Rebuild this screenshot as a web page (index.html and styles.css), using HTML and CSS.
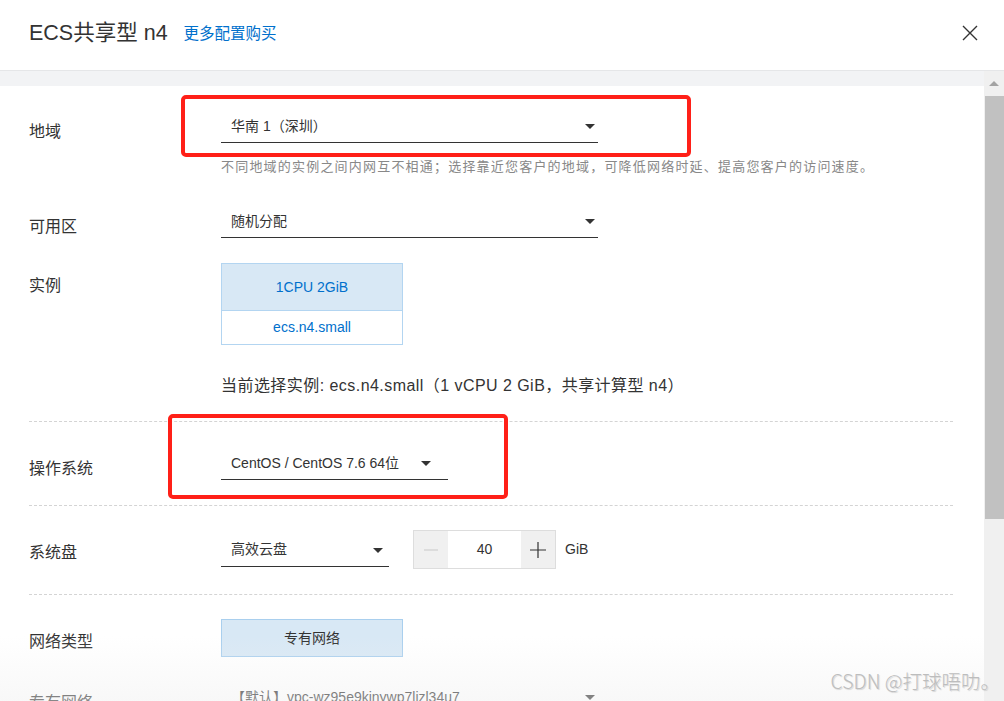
FILE: index.html
```html
<!DOCTYPE html>
<html lang="zh-CN">
  <head>
    <meta charset="UTF-8" />
    <title>ECS共享型 n4</title>
    <link rel="stylesheet" href="styles.css">
  </head>
  <body>
    <div class="dialog">
      <div class="header">
        <span class="title">ECS共享型 n4</span>
        <a class="more-link" href="#">更多配置购买</a>
        <span class="close">
          <svg width="16" height="16" viewBox="0 0 16 16"><path d="M1 1L15 15M15 1L1 15" stroke="#333" stroke-width="1.4" fill="none"/></svg>
        </span>
      </div>

      <div class="body">
        <div class="main">
          <div class="band"></div>
          <div class="content">
            <div class="section">
              <div class="row">
                <div class="label">地域</div>
                <div class="field">
                  <div class="select select-wide"><span>华南 1（深圳）</span><i class="caret"></i></div>
                  <div class="help">不同地域的实例之间内网互不相通；选择靠近您客户的地域，可降低网络时延、提高您客户的访问速度。</div>
                </div>
              </div>
              <div class="row row-zone">
                <div class="label">可用区</div>
                <div class="field">
                  <div class="select select-wide"><span>随机分配</span><i class="caret"></i></div>
                </div>
              </div>
              <div class="row row-instance">
                <div class="label">实例</div>
                <div class="field">
                  <div class="spec-card">
                    <div class="spec-top">1CPU 2GiB</div>
                    <div class="spec-bottom">ecs.n4.small</div>
                  </div>
                  <div class="current">当前选择实例: ecs.n4.small（1 vCPU 2 GiB，共享计算型 n4）</div>
                </div>
              </div>
            </div>

            <div class="section">
              <div class="row">
                <div class="label">操作系统</div>
                <div class="field">
                  <div class="select select-os"><span>CentOS / CentOS 7.6 64位</span><i class="caret"></i></div>
                </div>
              </div>
            </div>

            <div class="section">
              <div class="row">
                <div class="label">系统盘</div>
                <div class="field field-inline">
                  <div class="select select-disk"><span>高效云盘</span><i class="caret"></i></div>
                  <div class="stepper">
                    <span class="step step-minus"><svg width="14" height="2" viewBox="0 0 14 2"><path d="M0 1H14" stroke="#c8c8c8" stroke-width="1"/></svg></span>
                    <span class="step-value">40</span>
                    <span class="step step-plus"><svg width="16" height="16" viewBox="0 0 16 16"><path d="M0 8H16M8 0V16" stroke="#333" stroke-width="1.2"/></svg></span>
                  </div>
                  <span class="unit">GiB</span>
                </div>
              </div>
            </div>

            <div class="section section-last">
              <div class="row">
                <div class="label">网络类型</div>
                <div class="field">
                  <div class="net-btn">专有网络</div>
                </div>
              </div>
              <div class="row row-vpc">
                <div class="label">专有网络</div>
                <div class="field">
                  <div class="select select-wide"><span>【默认】vpc-wz95e9kinywp7lizl34u7</span><i class="caret"></i></div>
                </div>
              </div>
            </div>

            <!-- annotation boxes drawn over the form -->
            <div class="mark mark-region"></div>
            <div class="mark mark-os"></div>
          </div>
        </div>
        <div class="scrollbar">
          <div class="scroll-up"></div>
          <div class="scroll-thumb"></div>
        </div>
      </div>

      <div class="fade"></div>
      <div class="watermark">CSDN @打球唔叻。</div>
    </div>
  </body>
</html>
```

FILE: styles.css
```css
body {
  margin: 0;
  font-family: "Liberation Sans", "Noto Sans CJK SC", sans-serif;
  color: #333;
  background: #fff;
}

.dialog {
  position: relative;
  width: 1004px;
  height: 701px;
  overflow: hidden;
}

.header {
  display: flex;
  align-items: center;
  height: 71px;
  padding: 0 26px 5px 29px;
  box-sizing: border-box;
  border-bottom: 1px solid #e5e6e8;
}

.title {
  font-size: 21.5px;
  line-height: 26px;
  color: #333;
}

.more-link {
  margin-left: 16px;
  font-size: 15.5px;
  line-height: 20px;
  color: #0070cc;
  text-decoration: none;
  margin-top: 2px;
}

.close {
  margin-left: auto;
  display: flex;
}

.body {
  display: flex;
  height: 630px;
}

.main {
  flex: 1;
}

.band {
  height: 15px;
  background: #f2f3f5;
}

.content {
  position: relative;
  padding: 0 31px 0 29px;
}

.section {
  padding: 24px 0 25px;
  border-bottom: 1px dashed #d4d4d4;
}

.section:first-child {
  padding: 23px 0 24px;
}

.section-last {
  border-bottom: none;
}

.row {
  display: flex;
  align-items: flex-start;
}

.row-zone {
  margin-top: 28px;
}

.row-instance {
  margin-top: 25px;
}

.row-vpc {
  margin-top: 23px;
}

.label {
  width: 192px;
  flex-shrink: 0;
  padding-top: 13px;
  font-size: 16px;
  line-height: 20px;
  color: #333;
}

.field-inline {
  display: flex;
  align-items: center;
}

.select {
  display: flex;
  align-items: center;
  justify-content: space-between;
  height: 34px;
  padding: 0 3px 0 10px;
  box-sizing: border-box;
  border-bottom: 1px solid #333;
  font-size: 14px;
  line-height: 20px;
  color: #333;
}

.select-wide {
  width: 377px;
}

.select-os {
  width: 227px;
  padding-right: 17px;
}

.select-disk {
  width: 168px;
  padding-right: 6px;
}

.caret {
  width: 0;
  height: 0;
  border-left: 5px solid transparent;
  border-right: 5px solid transparent;
  border-top: 5px solid #333;
  margin-top: 2px;
}

.help {
  margin-top: 15px;
  font-size: 13px;
  line-height: 18px;
  color: #888;
  letter-spacing: 1.2px;
  white-space: nowrap;
}

.spec-card {
  width: 182px;
  border: 1px solid #b3d5f1;
  box-sizing: border-box;
  font-size: 14px;
  color: #0070cc;
  text-align: center;
}

.spec-top {
  height: 46px;
  line-height: 46px;
  background: #d8e8f5;
  border-bottom: 1px solid #b3d5f1;
}

.spec-bottom {
  height: 33px;
  line-height: 33px;
  background: #fff;
}

.current {
  margin-top: 30px;
  font-size: 16px;
  line-height: 22px;
  letter-spacing: 0.45px;
  color: #333;
  white-space: nowrap;
}

.stepper {
  display: flex;
  height: 39px;
  margin-left: 24px;
  border: 1px solid #ddd;
  box-sizing: border-box;
}

.step {
  width: 34px;
  display: flex;
  align-items: center;
  justify-content: center;
  background: #f0f0f0;
}

.step-value {
  width: 73px;
  text-align: center;
  font-size: 14px;
  line-height: 37px;
  color: #333;
}

.unit {
  margin-left: 9px;
  margin-top: -2px;
  font-size: 14px;
  color: #333;
}

.net-btn {
  width: 182px;
  height: 38px;
  box-sizing: border-box;
  border: 1px solid #a9cfee;
  background: #d8e8f5;
  font-size: 14px;
  line-height: 36px;
  text-align: center;
  color: #333;
}

.mark {
  position: absolute;
  border: 4px solid #ff2018;
  border-radius: 5px;
  box-sizing: border-box;
}

.mark-region {
  left: 181px;
  top: 9px;
  width: 510px;
  height: 62px;
}

.mark-os {
  left: 168px;
  top: 328px;
  width: 340px;
  height: 85px;
}

.scrollbar {
  width: 20px;
  background: #f0f0f0;
  display: flex;
  flex-direction: column;
  align-items: flex-end;
}

.scroll-up {
  align-self: center;
  margin-top: 10px;
  width: 0;
  height: 0;
  border-left: 5px solid transparent;
  border-right: 5px solid transparent;
  border-bottom: 5px solid #a3a3a3;
}

.scroll-thumb {
  width: 19px;
  height: 423px;
  margin-top: 10px;
  background: #c1c1c1;
}

.fade {
  position: absolute;
  left: 0;
  right: 0;
  bottom: 0;
  height: 65px;
  background: linear-gradient(rgba(240, 240, 240, 0), rgba(240, 240, 240, 0.45));
  pointer-events: none;
}

.watermark {
  position: absolute;
  right: 4px;
  bottom: 8px;
  font-family: "Noto Sans CJK SC", sans-serif;
  font-weight: 300;
  font-size: 19.5px;
  line-height: 24px;
  color: #bdbdbd;
  text-shadow: 1px 1px 1px rgba(0, 0, 0, 0.15);
}
```
